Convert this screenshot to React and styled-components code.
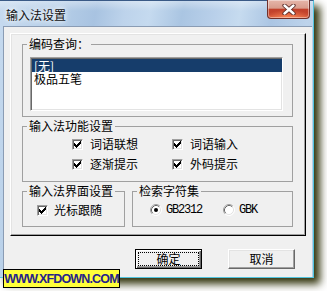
import React from "react";
import styled, { createGlobalStyle } from "styled-components";

const Global = createGlobalStyle`
  html, body { margin: 0; padding: 0; background: #fff; }
  body { font-family: "Noto Sans CJK SC", "Noto Sans", sans-serif; }
`;

const Stage = styled.div`
  position: relative;
  width: 327px;
  height: 291px;
  overflow: hidden;
  background: #fff;
`;

const Window = styled.div`
  box-sizing: border-box;
  width: 314px;
  height: 278px;
  display: flex;
  flex-direction: column;
  padding: 0 1px 0 3px;
  border-top: 1px solid #3a5a86;
  border-right: 1px solid #52c4de;
  border-bottom: 1px solid #52c4de;
  background:
    linear-gradient(180deg, rgba(255,255,255,0.35) 0px, rgba(255,255,255,0) 10px),
    linear-gradient(100deg, #c6daef 0%, #b7cfe8 16%, #a8c3e1 27%, #bdd3eb 35%, #c5daef 42%, #aac5e2 51%, #b9d0ea 60%, #c6dbef 67%, #abc5e3 76%, #bdd3eb 86%, #b3cce6 100%);
  box-shadow: 6px 6px 8px rgba(40, 42, 0, 0.95);
`;

const TitleBar = styled.div`
  height: 25px;
  display: flex;
  align-items: flex-start;
  justify-content: space-between;
`;

const Title = styled.span`
  margin: 7px 0 0 3px;
  font-size: 12px;
  line-height: 14px;
  color: #111;
  text-shadow: 0 0 4px #fff, 0 0 7px rgba(255, 255, 255, 0.9);
`;

const CloseButton = styled.div`
  box-sizing: border-box;
  width: 43px;
  height: 19px;
  margin: -1px 2px 0 0;
  border: 1px solid #70302a;
  border-top: none;
  border-radius: 0 0 4px 4px;
  background:
    radial-gradient(ellipse 60% 45% at 50% 100%, rgba(255, 140, 90, 0.9), rgba(255, 140, 90, 0) 100%),
    linear-gradient(180deg, #e6b6aa 0%, #d89c8c 45%, #c2412b 52%, #c4432c 80%, #d65a3a 100%);
  box-shadow: inset 0 0 0 1px rgba(255, 255, 255, 0.4);
  display: flex;
  align-items: center;
  justify-content: center;
`;

const Client = styled.div`
  flex: 1;
  display: flex;
  flex-direction: column;
  padding: 6px 6px 0 6px;
  background: #f0f0f0;
  border-top: 1px solid #8a9cb4;
  border-left: 1px solid #8a9cb4;
  font-size: 12px;
  color: #000;
`;

const Panel = styled.div`
  box-sizing: border-box;
  height: 203px;
  display: flex;
  flex-direction: column;
  gap: 3px;
  padding: 4px 12px 0 11px;
  border: 1px solid;
  border-color: #fff #000 #000 #fff;
  box-shadow: inset -1px -1px #a0a0a0, inset 1px 1px #e3e3e3;
`;

const Row = styled.div`
  display: flex;
  gap: 7px;
`;

const Group = styled.fieldset`
  box-sizing: border-box;
  margin: 0;
  padding: 0;
  min-width: 0;
  border: 1px solid #a0a0a0;
  width: ${(p) => (p.$w ? `${p.$w}px` : "auto")};
  height: ${(p) => p.$h}px;
`;

const Legend = styled.legend`
  margin-left: 4px;
  padding: 0 2px;
  height: 12px;
  font-size: 12px;
  line-height: 12px;
`;

const ListBox = styled.div`
  box-sizing: border-box;
  width: 253px;
  height: 54px;
  margin: 7px 0 0 7px;
  padding: 1px 0 0 1px;
  background: #fff;
  border: 1px solid;
  border-color: #a0a0a0 #fff #fff #a0a0a0;
  box-shadow: inset 1px 1px #696969, inset -1px -1px #e3e3e3;
`;

const ListItem = styled.div`
  height: 13px;
  padding-left: 2px;
  font-size: 12px;
  line-height: 13px;
  white-space: nowrap;
  background: ${(p) => (p.$selected ? "#163d6b" : "transparent")};
  color: ${(p) => (p.$selected ? "#fff" : "#000")};
`;

const OptionGrid = styled.div`
  display: grid;
  grid-template-columns: 100px 100px;
  row-gap: 4px;
  margin: 4px 0 0 49px;
`;

const OptionRow = styled.div`
  display: flex;
  gap: ${(p) => p.$gap || 0}px;
  margin: 5px 0 0 ${(p) => p.$left}px;
`;

const Option = styled.label`
  display: flex;
  align-items: center;
  gap: ${(p) => p.$gap}px;
  height: 16px;
  font-size: 12px;
  line-height: 16px;
  white-space: nowrap;
`;

const CheckBox = styled.span`
  box-sizing: border-box;
  flex: none;
  width: 11px;
  height: 11px;
  display: flex;
  align-items: center;
  justify-content: center;
  background: #fff;
  border: 1px solid;
  border-color: #a0a0a0 #fff #fff #a0a0a0;
  box-shadow: inset 1px 1px #696969, inset -1px -1px #e3e3e3;
`;

const Latin = styled.span`
  font-family: "Liberation Mono", "DejaVu Sans Mono", monospace;
  font-size: 12px;
  letter-spacing: -1.2px;
`;

const ButtonRow = styled.div`
  display: flex;
  justify-content: flex-end;
  gap: 26px;
  margin: 13px 11px 0 0;
`;

const Button = styled.div`
  box-sizing: border-box;
  width: 67px;
  height: 20px;
  display: flex;
  padding: 2px;
  background: #f0f0f0;
  border: 1px solid;
  border-color: ${(p) => (p.$default ? "#000" : "#fff #696969 #696969 #fff")};
  box-shadow: ${(p) =>
    p.$default
      ? "inset 1px 1px #fff, inset -1px -1px #696969, inset -2px -2px #a0a0a0"
      : "inset -1px -1px #a0a0a0, inset 1px 1px #e3e3e3"};
`;

const ButtonLabel = styled.span`
  flex: 1;
  display: flex;
  align-items: center;
  justify-content: center;
  font-size: 12px;
  line-height: 12px;
  border: 1px dotted ${(p) => (p.$focus ? "#000" : "transparent")};
`;

const Watermark = styled.div`
  position: absolute;
  left: 3px;
  top: 269px;
  box-sizing: border-box;
  width: 117px;
  height: 19px;
  display: flex;
  align-items: center;
  justify-content: center;
  background: #ffff3a;
  border: 1px solid #000;
  font-family: "Liberation Sans", Arial, sans-serif;
  font-weight: bold;
  font-size: 12.5px;
  letter-spacing: -0.85px;
  color: #25238a;
`;

const CheckMark = () => (
  <svg width="7" height="7" viewBox="0 0 7 7" shapeRendering="crispEdges">
    <path
      fill="#000"
      d="M6 0h1v1h-1zM5 1h2v1h-2zM0 2h1v1h-1zM4 2h3v1h-3zM0 3h2v1h-2zM3 3h3v1h-3zM0 4h5v1h-5zM1 5h3v1h-3zM2 6h1v1h-1z"
    />
  </svg>
);

const Check = ({ label, gap = 7 }) => (
  <Option $gap={gap}>
    <CheckBox>
      <CheckMark />
    </CheckBox>
    {label}
  </Option>
);

const RadioMark = ({ checked }) => (
  <svg width="12" height="12" viewBox="0 0 12 12" style={{ flex: "none" }}>
    <circle cx="6" cy="6" r="5" fill="#fff" />
    <path d="M2.11 9.89 A5.5 5.5 0 0 1 9.89 2.11" fill="none" stroke="#a0a0a0" />
    <path d="M9.89 2.11 A5.5 5.5 0 0 1 2.11 9.89" fill="none" stroke="#ffffff" />
    <path d="M2.82 9.18 A4.5 4.5 0 0 1 9.18 2.82" fill="none" stroke="#696969" />
    <path d="M9.18 2.82 A4.5 4.5 0 0 1 2.82 9.18" fill="none" stroke="#e3e3e3" />
    {checked && <circle cx="6" cy="6" r="2" fill="#000" />}
  </svg>
);

const Radio = ({ label, checked }) => (
  <Option $gap={4}>
    <RadioMark checked={checked} />
    <Latin>{label}</Latin>
  </Option>
);

const CloseIcon = () => (
  <svg width="14" height="11" viewBox="0 0 14 11">
    <path d="M2.5 1.5 L11.5 9.5 M11.5 1.5 L2.5 9.5" stroke="#5a2a26" strokeWidth="4.2" strokeLinecap="round" />
    <path d="M2.5 1.5 L11.5 9.5 M11.5 1.5 L2.5 9.5" stroke="#ffffff" strokeWidth="2.4" strokeLinecap="round" />
  </svg>
);

export default function App() {
  return (
    <Stage>
      <Global />
      <Window>
        <TitleBar>
          <Title>输入法设置</Title>
          <CloseButton>
            <CloseIcon />
          </CloseButton>
        </TitleBar>
        <Client>
          <Panel>
            <Group $h={79}>
              <Legend>编码查询：</Legend>
              <ListBox>
                <ListItem $selected>[无]</ListItem>
                <ListItem>极品五笔</ListItem>
              </ListBox>
            </Group>
            <Group $h={62}>
              <Legend>输入法功能设置</Legend>
              <OptionGrid>
                <Check label="词语联想" />
                <Check label="词语输入" />
                <Check label="逐渐提示" />
                <Check label="外码提示" />
              </OptionGrid>
            </Group>
            <Row>
              <Group $w={103} $h={42}>
                <Legend>输入法界面设置</Legend>
                <OptionRow $left={14}>
                  <Check label="光标跟随" gap={6} />
                </OptionRow>
              </Group>
              <Group $w={161} $h={42}>
                <Legend>检索字符集</Legend>
                <OptionRow $left={17} $gap={21}>
                  <Radio label="GB2312" checked />
                  <Radio label="GBK" />
                </OptionRow>
              </Group>
            </Row>
          </Panel>
          <ButtonRow>
            <Button $default>
              <ButtonLabel $focus>确定</ButtonLabel>
            </Button>
            <Button>
              <ButtonLabel>取消</ButtonLabel>
            </Button>
          </ButtonRow>
        </Client>
      </Window>
      <Watermark>WWW.XFDOWN.COM</Watermark>
    </Stage>
  );
}
